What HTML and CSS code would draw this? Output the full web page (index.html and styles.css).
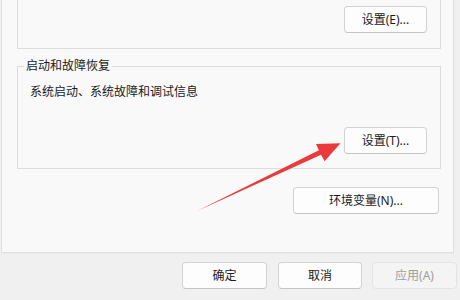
FILE: index.html
```html
<!DOCTYPE html>
<html lang="zh-CN">
<head>
<meta charset="utf-8">
<link rel="stylesheet" href="styles.css">
</head>
<body>
<div class="tab">
  <div class="group group-top">
    <button class="btn">设置(E)...</button>
  </div>
  <fieldset class="group group-boot">
    <legend class="legend">启动和故障恢复</legend>
    <p class="desc">系统启动、系统故障和调试信息</p>
    <div class="row">
      <button class="btn">设置(T)...</button>
    </div>
  </fieldset>
  <div class="env-row">
    <button class="btn btn-wide">环境变量(N)...</button>
  </div>
</div>
<div class="footer">
  <button class="btn btn-ok">确定</button>
  <button class="btn btn-cancel">取消</button>
  <button class="btn btn-apply" disabled>应用(A)</button>
</div>
<svg class="arrow" width="460" height="300" viewBox="0 0 460 300">
  <polygon points="197,211 318.9,150.2 316,144 340.5,143.2 324.6,161.2 321.1,154.8" fill="#ea3a3b"/>
</svg>
</body>
</html>
```
FILE: styles.css
```css
html, body {
  margin: 0;
  padding: 0;
}
body {
  position: relative;
  width: 460px;
  height: 300px;
  overflow: hidden;
  background: #f0f0f0;
  font-family: "Noto Sans", "Noto Sans CJK SC", sans-serif;
  font-size: 12px;
  line-height: 16px;
  color: #1a1a1a;
}
.tab {
  box-sizing: border-box;
  width: 453px;
  height: 253px;
  margin-left: 1px;
  padding: 0 12px 0 15px;
  background: #f9f9f9;
  border: 1px solid #e0e0e0;
  border-top: none;
  box-shadow: 0 1px 0 #ebebeb;
}
.group {
  border: 1px solid #dddddd;
}
.group-top {
  border-top: none;
  padding: 6px 13px 15px;
  text-align: right;
}
.group-boot {
  margin: 9px 0 0;
  padding: 0 13px 14px 6px;
  min-width: 0;
}
.legend {
  padding: 0 2px;
  line-height: 16px;
}
.desc {
  margin: 10px 0 0 6px;
}
.row {
  margin-top: 27px;
  text-align: right;
  line-height: 0;
}
.env-row {
  margin-top: 18px;
  padding-right: 2px;
  text-align: right;
  line-height: 0;
}
.btn {
  box-sizing: border-box;
  width: 83px;
  height: 27px;
  padding: 0;
  margin: 0;
  font: inherit;
  font-size: 12px;
  line-height: 25px;
  color: #1a1a1a;
  background: #fdfdfd;
  border: 1px solid #d3d3d3;
  border-bottom-color: #c4c4c4;
  border-radius: 4px;
  vertical-align: top;
}
.group-top .btn {
  display: inline-block;
}
.btn-wide {
  width: 146px;
}
.footer {
  display: flex;
  justify-content: flex-end;
  padding: 9px 3px 0 0;
}
.btn-ok {
  width: 85px;
  margin-right: 11px;
}
.btn-cancel {
  width: 84px;
  margin-right: 10px;
}
.btn-apply {
  width: 85px;
  color: #9e9e9e;
  background: #f4f4f4;
  border-color: #e4e4e4;
}
.arrow {
  position: absolute;
  left: 0;
  top: 0;
  pointer-events: none;
}
```
